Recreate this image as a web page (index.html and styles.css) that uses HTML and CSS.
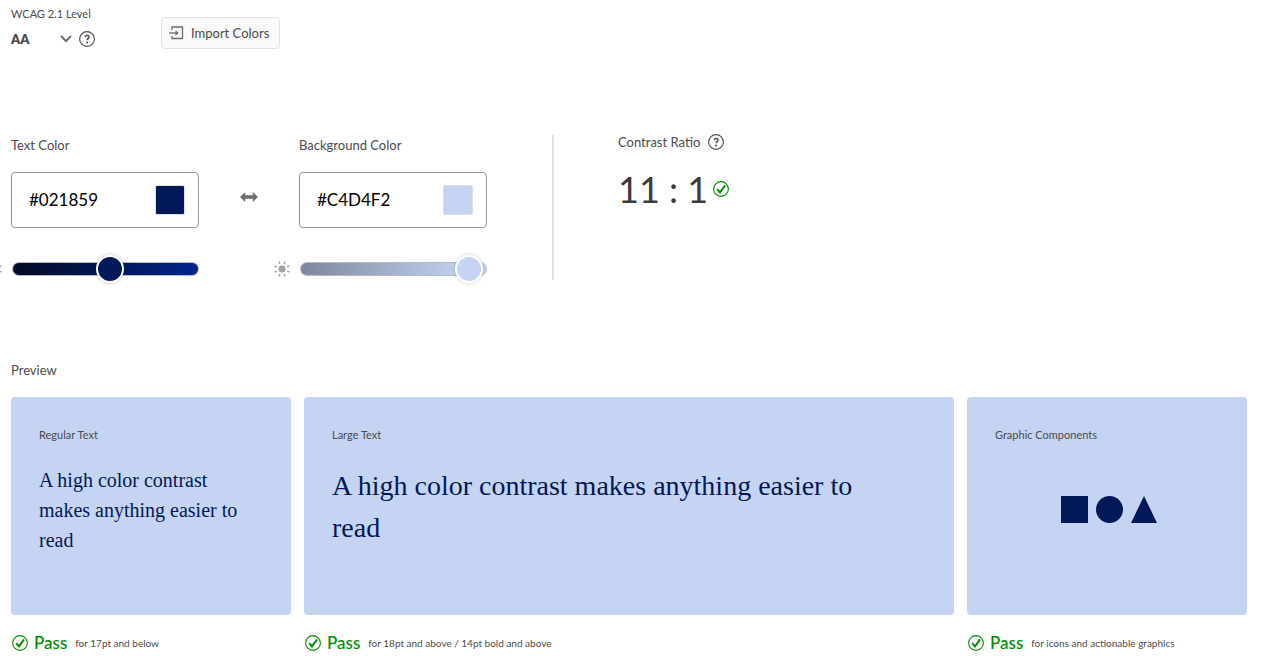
FILE: index.html
```html
<!DOCTYPE html>
<html lang="en">
<head>
<meta charset="utf-8">
<title>Contrast Checker</title>
<link rel="stylesheet" href="styles.css">
</head>
<body>
<svg class="defs" aria-hidden="true">
  <symbol id="help" viewBox="0 0 18 18">
    <circle cx="9" cy="9" r="7.4" fill="none" stroke="currentColor" stroke-width="1.1"/>
    <path d="M6.9 6.6C7.4 5.9 8.1 5.4 9 5.4c1.200 0 2 .7 2 1.700 0 1.500-1.900 1.600-1.900 3.200" fill="none" stroke="currentColor" stroke-width="1.500"/>
    <circle cx="9.100" cy="12.500" r="1" fill="currentColor"/>
  </symbol>
  <symbol id="check" viewBox="0 0 18 18">
    <circle cx="9" cy="9" r="7.400" fill="none" stroke="currentColor" stroke-width="1.100"/>
    <path d="M5.200 9.200l2.800 3.200 5.100-7" fill="none" stroke="currentColor" stroke-width="1.900"/>
  </symbol>
  <symbol id="sun" viewBox="0 0 16 16">
    <circle cx="8" cy="8" r="3.500" fill="currentColor"/>
    <path d="M8 0v2.500M8 13.500V16M0 8h2.500M13.500 8H16M2.300 2.300l1.700 1.700M12 12l1.700 1.700M2.300 13.700L4 12M12 4l1.700-1.700" transform="rotate(22 8 8)" stroke="currentColor" stroke-width="1.400"/>
  </symbol>
</svg>
<header class="toolbar">
  <div class="level">
    <label class="level-label" for="level">WCAG 2.1 Level</label>
    <div class="level-row">
      <div class="picker">
        <select id="level"><option>AA</option><option>AAA</option></select>
        <svg class="chevron" viewBox="0 0 12 8" aria-hidden="true"><path d="M1.500 1.500L6 6l4.500-4.500" fill="none" stroke="currentColor" stroke-width="2" stroke-linecap="round"/></svg>
      </div>
      <button class="icon-button" type="button" aria-label="About levels"><svg class="icon"><use href="#help"/></svg></button>
    </div>
  </div>
  <button class="import" type="button">
    <svg class="import-icon" viewBox="0 0 16 16" aria-hidden="true">
      <path d="M3 5V2h10.500v11.500H3V11" fill="none" stroke="currentColor" stroke-width="1.300"/>
      <path d="M0 8h7" fill="none" stroke="currentColor" stroke-width="1.300"/>
      <path d="M6.500 5.200L9.700 8l-3.200 2.800z" fill="currentColor"/>
    </svg>
    Import Colors
  </button>
</header>

<main>
  <section class="controls">
    <div class="color">
      <label class="label" for="fg">Text Color</label>
      <div class="field">
        <input class="hex" id="fg" type="text" value="#021859">
        <button class="swatch dark" type="button" aria-label="Choose text color"></button>
      </div>
      <div class="slider-row">
        <svg class="sun" aria-hidden="true"><use href="#sun"/></svg>
        <input class="slider dark" type="range" value="53" aria-label="Text brightness">
      </div>
    </div>
    <button class="swap" type="button" aria-label="Swap colors">
      <svg class="swap-icon" viewBox="0 0 18 12" aria-hidden="true"><path d="M0 6l5.200-5v3.200h7.600V1L18 6l-5.200 5V7.800H5.200V11z" fill="currentColor"/></svg>
    </button>
    <div class="color">
      <label class="label" for="bg">Background Color</label>
      <div class="field">
        <input class="hex" id="bg" type="text" value="#C4D4F2">
        <button class="swatch light" type="button" aria-label="Choose background color"></button>
      </div>
      <div class="slider-row">
        <svg class="sun" aria-hidden="true"><use href="#sun"/></svg>
        <input class="slider light" type="range" value="98" aria-label="Background brightness">
      </div>
    </div>
    <div class="ratio">
      <div class="ratio-label">Contrast Ratio
        <button class="icon-button" type="button" aria-label="About contrast ratio"><svg class="icon"><use href="#help"/></svg></button>
      </div>
      <div class="ratio-value">11 : 1 <svg class="icon pass-icon" aria-hidden="true"><use href="#check"/></svg></div>
    </div>
  </section>

  <h2 class="heading">Preview</h2>
  <section class="previews">
    <article>
      <div class="card">
        <h3 class="card-title">Regular Text</h3>
        <p class="regular">A high color contrast makes anything easier to read</p>
      </div>
      <div class="result"><svg class="icon" aria-hidden="true"><use href="#check"/></svg><strong class="pass">Pass</strong><span class="note">for 17pt and below</span></div>
    </article>
    <article>
      <div class="card">
        <h3 class="card-title">Large Text</h3>
        <p class="large">A high color contrast makes anything easier to read</p>
      </div>
      <div class="result"><svg class="icon" aria-hidden="true"><use href="#check"/></svg><strong class="pass">Pass</strong><span class="note">for 18pt and above / 14pt bold and above</span></div>
    </article>
    <article>
      <div class="card">
        <h3 class="card-title">Graphic Components</h3>
        <svg class="shapes" viewBox="-4 0 100 27" aria-hidden="true"><path d="M0 0h27v27H0z"/><circle cx="48.500" cy="13.500" r="13.500"/><path d="M83 0l13 27H70z"/></svg>
      </div>
      <div class="result"><svg class="icon" aria-hidden="true"><use href="#check"/></svg><strong class="pass">Pass</strong><span class="note">for icons and actionable graphics</span></div>
    </article>
  </section>
</main>
</body>
</html>
```
FILE: styles.css
```css
* { box-sizing: border-box; }

body {
  margin: 0;
  padding: 6px 26px 0 11px;
  background: #fff;
  color: #4b4b4b;
  font-family: Lato, "Noto Sans", sans-serif;
  font-size: 13px;
  line-height: 20px;
  overflow-x: hidden;
}

button, input, select { font: inherit; color: inherit; }
button { padding: 0; border: 0; background: none; cursor: pointer; }
h2, h3, p { margin: 0; font-weight: 400; }
svg { display: block; flex: none; }
.defs { display: none; }
.icon { width: 18px; height: 18px; }
.icon-button { display: flex; color: #4b4b4b; }

.toolbar { display: flex; align-items: flex-start; height: 46px; }
.level { width: 150px; }
.level-label { display: block; font-size: 11px; line-height: 16px; }
.level-row { display: flex; align-items: center; gap: 6px; margin-top: 7px; }
.picker { display: grid; align-items: center; width: 61px; }
.picker > * { grid-area: 1 / 1; }
.picker select {
  width: 100%;
  height: 20px;
  padding: 0;
  border: 0;
  background: none;
  appearance: none;
  font-weight: 800;
}
.chevron { justify-self: end; width: 12px; height: 8px; color: #6e6e6e; pointer-events: none; }
.import {
  display: flex;
  align-items: center;
  gap: 6px;
  height: 32px;
  margin-top: 11px;
  padding: 0 10px 0 7px;
  border: 1px solid #e1e1e1;
  border-radius: 4px;
  background: #fafafa;
}
.import-icon { width: 16px; height: 16px; color: #6e6e6e; }

.controls { display: flex; margin-top: 83px; }
.color { width: 188px; }
.label { display: block; }
.field {
  display: flex;
  align-items: center;
  height: 56px;
  margin-top: 17px;
  padding: 0 13px 0 17px;
  border: 1px solid #959595;
  border-radius: 4px;
}
.hex {
  flex: 1;
  min-width: 0;
  padding: 0;
  border: 0;
  outline: 0;
  background: none;
  color: #000;
  font-size: 17px;
}
.swatch { width: 30px; height: 30px; border: 1px solid #e1e1e1; border-radius: 2px; }
.swatch.dark { background: #021859; }
.swatch.light { background: #c4d4f2; }

.slider-row { display: flex; align-items: center; gap: 10px; margin: 27px 0 0 -25px; }
.sun { width: 16px; height: 16px; color: #a2a2a2; }
.slider { flex: 1; min-width: 0; height: 28px; margin: 0; appearance: none; background: none; }
.slider::-webkit-slider-runnable-track {
  height: 14px;
  border: 1px solid #b9b9b9;
  border-radius: 7px;
}
.slider.dark::-webkit-slider-runnable-track { background: linear-gradient(90deg, #020a24, #021859 54%, #02258c); }
.slider.light::-webkit-slider-runnable-track { background: linear-gradient(90deg, #7b879e, #c4d4f2 90%); }
.slider::-webkit-slider-thumb {
  appearance: none;
  width: 28px;
  height: 28px;
  margin-top: -8px;
  border: 2px solid #fff;
  border-radius: 50%;
  box-shadow: 0 0 4px rgba(0, 0, 0, 0.2);
}
.slider.dark::-webkit-slider-thumb { background: #021859; }
.slider.light::-webkit-slider-thumb { background: #c4d4f2; }

.swap { align-self: flex-start; display: flex; justify-content: center; width: 100px; margin-top: 56px; color: #6e6e6e; }
.swap-icon { width: 18px; height: 12px; }

.ratio { height: 145px; margin-left: 65px; padding-left: 64px; border-left: 2px solid #e1e1e1; }
.ratio-label { display: flex; align-items: center; gap: 7px; margin-top: -3px; }
.ratio-value { display: flex; align-items: center; gap: 4px; margin-top: 13px; color: #3b3b3b; font-size: 36px; line-height: 48px; }
.pass-icon { color: #008a00; }

.heading { margin-top: 77px; font-size: 13px; }
.previews { display: grid; grid-template-columns: 280px 1fr 280px; gap: 13px; margin-top: 17px; }
.card { min-height: 218px; padding: 28px; border-radius: 4px; background: #c4d4f2; color: #021859; }
.card-title { color: #4b4b4b; font-size: 11px; }
.regular, .large { margin-top: 20px; font-family: "Liberation Serif", serif; }
.regular { font-size: 20px; line-height: 30px; }
.large { padding-right: 28px; font-size: 28px; line-height: 42px; }
.shapes { width: 100px; height: 27px; margin: 51px auto 0; fill: #021859; }
.result { display: flex; align-items: center; margin-top: 18px; color: #008a00; }
.pass { margin-left: 5px; font-size: 17px; font-weight: 500; }
.note { margin-left: 8px; color: #4b4b4b; font-size: 10px; }
```
